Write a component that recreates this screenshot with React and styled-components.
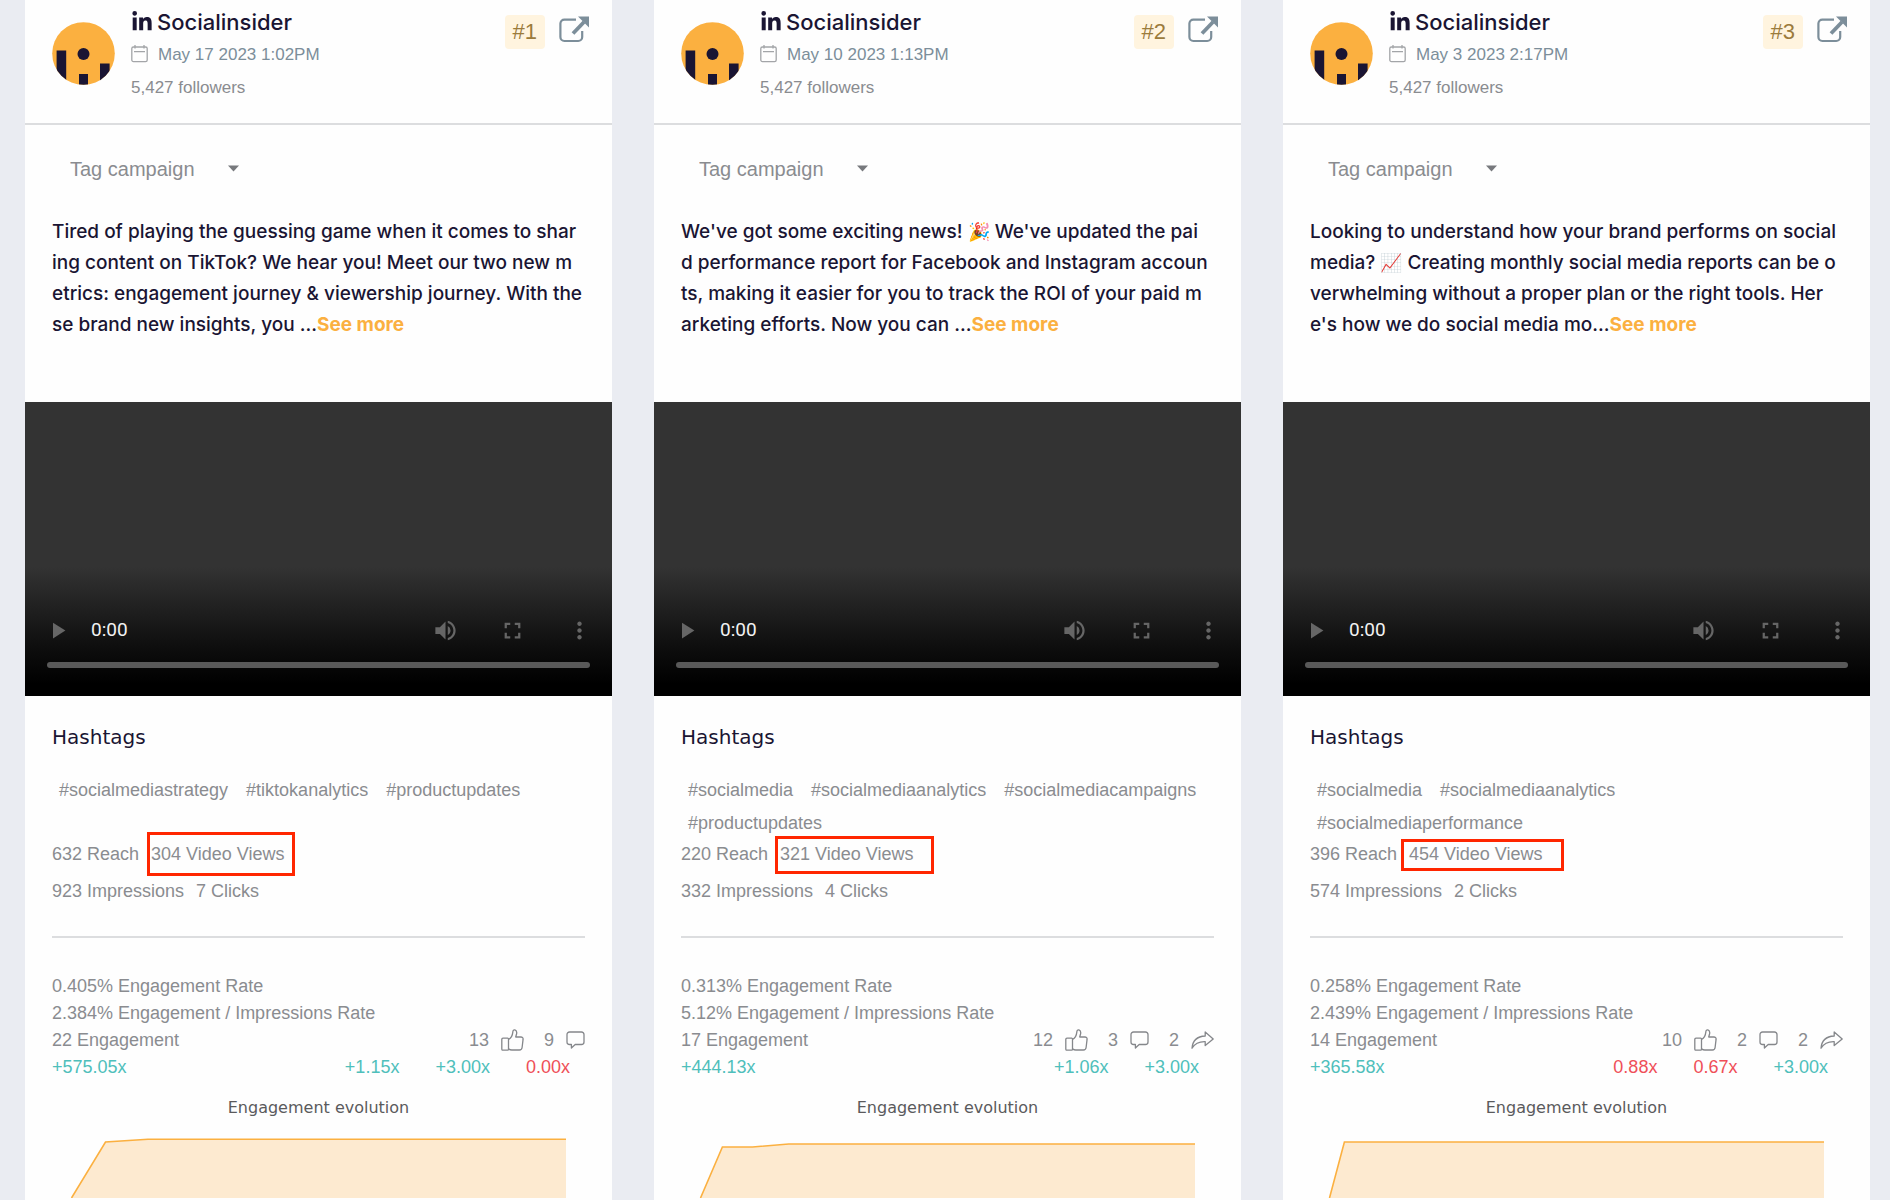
import React from 'react';
import styled, { createGlobalStyle } from 'styled-components';
import { FaLinkedinIn } from 'react-icons/fa';
import { MdPlayArrow, MdVolumeUp, MdFullscreen, MdMoreVert } from 'react-icons/md';

const colors = {
  page: '#eaecf2',
  card: '#fefefe',
  dark: '#1a1533',
  gray: '#8a8c90',
  slate: '#7c8e9a',
  line: '#dcdddf',
  orange: '#fbb040',
  orangeSoft: '#fdead0',
  up: '#4fbfbb',
  down: '#ef4f58',
  mark: '#ff2600',
};

const GlobalStyle = createGlobalStyle`
  *, *::before, *::after {
    box-sizing: border-box;
  }

  body {
    margin: 0;
    background: ${colors.page};
    color: ${colors.gray};
    font-family: "Liberation Sans", Arial, sans-serif;
    font-size: 18px;
  }
`;

const Page = styled.main`
  display: grid;
  grid-template-columns: repeat(3, minmax(0, 1fr));
  gap: 42px;
  min-height: 100vh;
  padding: 0 20px 0 25px;
`;

const Card = styled.article`
  display: flex;
  flex-direction: column;
  background: ${colors.card};
`;

const Header = styled.header`
  display: flex;
  align-items: flex-start;
  min-height: 125px;
  padding: 0 23px 0 27px;
  border-bottom: 2px solid ${colors.line};
`;

const Avatar = styled.svg`
  flex: none;
  width: 63px;
  height: 63px;
  margin: 22px 16px 0 0;
`;

const Profile = styled.div`
  flex: 1;
  display: grid;
  gap: 9px;
  padding-top: 10px;
`;

const ProfileName = styled.h2`
  display: flex;
  align-items: center;
  gap: 4px;
  margin: 0;
  color: ${colors.dark};
  font: 500 22px/24px Inter, sans-serif;
`;

const PostDate = styled.time`
  display: flex;
  align-items: center;
  gap: 10px;
  color: ${colors.slate};
  font-size: 17px;
  line-height: 24px;
`;

const Followers = styled.div`
  font-size: 17px;
  line-height: 24px;
`;

const HeaderActions = styled.div`
  display: flex;
  gap: 14px;
  padding-top: 15px;
`;

const Rank = styled.span`
  padding: 0 8px;
  border-radius: 4px;
  background: #fff4df;
  color: #9b7b3c;
  font-size: 22px;
  line-height: 34px;
`;

const OpenLink = styled.a`
  color: ${colors.slate};
`;

const Content = styled.div`
  padding: 32px 27px 62px;
`;

const SelectBox = styled.label`
  position: relative;
  display: inline-block;
  margin-left: 18px;
  vertical-align: top;
`;

const Select = styled.select`
  display: block;
  width: 180px;
  height: 24px;
  padding: 0;
  border: none;
  appearance: none;
  background: none;
  color: ${colors.gray};
  font: 20px/24px "Liberation Sans", Arial, sans-serif;
`;

const Caret = styled.svg`
  position: absolute;
  top: 8px;
  right: 11px;
  pointer-events: none;
`;

const Message = styled.p`
  margin: 35px 0 0;
  color: ${colors.dark};
  font: 500 19px/31px Inter, sans-serif;
  white-space: pre;
`;

const Emoji = styled.span`
  font-size: 18px;
  line-height: 1;
`;

const SeeMore = styled.button`
  padding: 0;
  border: none;
  background: none;
  color: ${colors.orange};
  font: inherit;
  font-weight: 700;
  cursor: pointer;
`;

const Video = styled.section`
  display: flex;
  flex-direction: column;
  justify-content: flex-end;
  gap: 18px;
  aspect-ratio: 2 / 1;
  padding-bottom: 28px;
  background: linear-gradient(#333 0%, #333 56%, #232323 68%, #0d0d0d 84%, #000 96%);
`;

const Controls = styled.div`
  display: flex;
  align-items: center;
  gap: 40px;
  padding: 0 19px;
`;

const ControlButton = styled.button`
  display: flex;
  padding: 0;
  border: none;
  background: none;
  color: #666;
  font-size: 27px;
`;

const VideoTime = styled.span`
  flex: 1;
  margin-left: -20px;
  color: #f2f2f2;
  font: 19px/24px Roboto, sans-serif;
`;

const Timeline = styled.input`
  height: 6px;
  margin: 0 22px;
  appearance: none;
  border-radius: 3px;
  background: #595959;

  &::-webkit-slider-thumb {
    appearance: none;
    width: 0;
  }
`;

const Section = styled.section`
  padding: 29px 27px 0;
`;

const SectionTitle = styled.h3`
  margin: 0;
  color: ${colors.dark};
  font: 400 20px/24px "DejaVu Sans", sans-serif;
`;

const Tags = styled.div`
  display: flex;
  flex-wrap: wrap;
  align-content: flex-start;
  column-gap: 18px;
  min-height: 66px;
  margin: 25px 8px 2px 7px;
  line-height: 33px;
`;

const Tag = styled.a`
  color: inherit;
  text-decoration: none;
`;

const StatRow = styled.div`
  display: flex;
  gap: 12px;
  margin-bottom: 13px;
  line-height: 24px;
`;

const Marked = styled.span`
  position: relative;
`;

// hand-drawn style annotation around the video views figure
const Mark = styled.span`
  position: absolute;
  top: ${({ $top }) => $top}px;
  left: ${({ $left }) => $left}px;
  width: ${({ $width }) => $width}px;
  height: ${({ $height }) => $height}px;
  border: 3px solid ${colors.mark};
`;

const Divider = styled.hr`
  height: 2px;
  margin: 33px 0 35px;
  border: none;
  background: ${colors.line};
`;

const Row = styled.div`
  display: flex;
  justify-content: space-between;
  line-height: 27px;
`;

const Reactions = styled.div`
  display: flex;
  gap: 20px;
`;

const Reaction = styled.span`
  display: flex;
  align-items: center;
  gap: 12px;
`;

const Changes = styled.div`
  display: flex;
  gap: 36px;
  padding-right: 15px;
`;

const Change = styled.span`
  color: ${({ $value }) => ($value.startsWith('+') ? colors.up : colors.down)};
`;

const ChartTitle = styled.h4`
  margin: 15px 0 0;
  color: #5a5a5c;
  font: 400 16px/24px "DejaVu Sans", sans-serif;
  text-align: center;
`;

const Chart = styled.svg`
  display: block;
  width: 100%;
`;

const AvatarImage = () => (
  <Avatar viewBox="0 0 63 63" role="img" aria-label="Socialinsider">
    <clipPath id="round">
      <circle cx="31.5" cy="31.5" r="31.3" />
    </clipPath>
    <g clipPath="url(#round)">
      <rect width="63" height="63" fill={colors.orange} />
      <g fill={colors.dark}>
        <rect x="4.6" y="28.5" width="9.6" height="36" />
        <rect x="27" y="52" width="9" height="12" />
        <rect x="48" y="41.5" width="9.6" height="22" />
        <circle cx="31.5" cy="32" r="6" />
      </g>
    </g>
  </Avatar>
);

const CalendarIcon = () => (
  <svg width="17" height="20" viewBox="0 0 17 20" fill="none" stroke="#a3a5a8" strokeWidth="1.3">
    <rect x="0.8" y="2" width="15.4" height="14.6" rx="1.6" />
    <path d="M4 0v3.4M13 0v3.4M3 6.6h11" />
  </svg>
);

const OpenIcon = () => (
  <svg width="30" height="28" viewBox="0 0 30 28" fill="none" stroke="currentColor">
    <path
      d="M17 4.6H5.4a4 4 0 0 0-4 4V22a4 4 0 0 0 4 4h13.8a4 4 0 0 0 4-4v-6"
      strokeWidth="2.2"
    />
    <path d="M14 18.500L25 7" strokeWidth="3.8" />
    <path d="M19 1.5h11v11z" fill="currentColor" stroke="none" />
  </svg>
);

const iconProps = { fill: 'none', stroke: '#85878b', strokeWidth: 1.3, strokeLinejoin: 'round' };

const LikeIcon = () => (
  <svg width="23" height="22" viewBox="0 0 23 22" {...iconProps}>
    <path d="M2 9.2h4.6c.6 0 .9.4.9.9v10.2c0 .6-.3.9-.9.9H2c-.8 0-1.2-.4-1.2-1.1v-9.8c0-.7.4-1.1 1.2-1.1z" />
    <path d="M7.5 10.5c2.6-1.5 4-3.7 4.3-7.4.1-1.7 1-2.5 2.1-2.2 1.6.5 2.1 2.3 1.6 4.4L14.7 8h5.2c1.5 0 2.3.9 2.2 2.2l-1 8.3c-.2 1.7-1.1 2.5-2.7 2.5h-7.6c-1.3 0-2.1-.3-3.3-1.1" />
  </svg>
);

const CommentIcon = () => (
  <svg width="19" height="18" viewBox="0 0 19 18" {...iconProps}>
    <path d="M3.5 1h12A2.5 2.5 0 0 1 18 3.5V11a2.5 2.5 0 0 1-2.5 2.5H9.2L5.4 17v-3.5H3.5A2.5 2.5 0 0 1 1 11V3.5A2.5 2.5 0 0 1 3.5 1z" />
  </svg>
);

const ShareIcon = () => (
  <svg width="23" height="18" viewBox="0 0 23 18" {...iconProps}>
    <path d="M14.2 1l8 7-8 6.600v-4C8.200 10.400 4.300 11.800 1 17.200 1.600 10 6.200 5.400 14.200 5z" />
  </svg>
);

const reactionIcons = { like: LikeIcon, comment: CommentIcon, share: ShareIcon };

const posts = [
  {
    rank: '#1',
    date: 'May 17 2023 1:02PM',
    message: [
      'Tired of playing the guessing game when it comes to shar\n',
      'ing content on TikTok? We hear you! Meet our two new m\n',
      'etrics: engagement journey & viewership journey. With the\n',
      'se brand new insights, you ...',
    ],
    tags: ['#socialmediastrategy', '#tiktokanalytics', '#productupdates'],
    reach: '632 Reach',
    views: '304 Video Views',
    mark: { $top: -10, $left: -4, $width: 148, $height: 44 },
    impressions: '923 Impressions',
    clicks: '7 Clicks',
    rate: '0.405% Engagement Rate',
    impressionRate: '2.384% Engagement / Impressions Rate',
    engagement: '22 Engagement',
    change: '+575.05x',
    reactions: [['like', 13], ['comment', 9]],
    changes: ['+1.15x', '+3.00x', '0.00x'],
    points: [[46.5, 78], [80.5, 22], [123, 19.3], [541, 19.3]],
  },
  {
    rank: '#2',
    date: 'May 10 2023 1:13PM',
    message: [
      "We've got some exciting news! ",
      { emoji: '🎉' },
      " We've updated the pai\n",
      'd performance report for Facebook and Instagram accoun\n',
      'ts, making it easier for you to track the ROI of your paid m\n',
      'arketing efforts. Now you can ...',
    ],
    tags: ['#socialmedia', '#socialmediaanalytics', '#socialmediacampaigns', '#productupdates'],
    reach: '220 Reach',
    views: '321 Video Views',
    mark: { $top: -6, $left: -5, $width: 159, $height: 38 },
    impressions: '332 Impressions',
    clicks: '4 Clicks',
    rate: '0.313% Engagement Rate',
    impressionRate: '5.12% Engagement / Impressions Rate',
    engagement: '17 Engagement',
    change: '+444.13x',
    reactions: [['like', 12], ['comment', 3], ['share', 2]],
    changes: ['+1.06x', '+3.00x'],
    points: [[46.5, 78], [68.4, 27], [98.5, 27], [134.7, 24], [541, 24]],
  },
  {
    rank: '#3',
    date: 'May 3 2023 2:17PM',
    message: [
      'Looking to understand how your brand performs on social\n',
      'media? ',
      { emoji: '📈' },
      ' Creating monthly social media reports can be o\n',
      'verwhelming without a proper plan or the right tools. Her\n',
      "e's how we do social media mo...",
    ],
    tags: ['#socialmedia', '#socialmediaanalytics', '#socialmediaperformance'],
    reach: '396 Reach',
    views: '454 Video Views',
    mark: { $top: -3, $left: -8, $width: 163, $height: 32 },
    impressions: '574 Impressions',
    clicks: '2 Clicks',
    rate: '0.258% Engagement Rate',
    impressionRate: '2.439% Engagement / Impressions Rate',
    engagement: '14 Engagement',
    change: '+365.58x',
    reactions: [['like', 10], ['comment', 2], ['share', 2]],
    changes: ['0.88x', '0.67x', '+3.00x'],
    points: [[46.5, 78], [61.4, 22], [541, 22]],
  },
];

const VideoPlayer = () => (
  <Video>
    <Controls>
      <ControlButton aria-label="Play"><MdPlayArrow /></ControlButton>
      <VideoTime>0:00</VideoTime>
      <ControlButton aria-label="Mute"><MdVolumeUp /></ControlButton>
      <ControlButton aria-label="Full screen"><MdFullscreen /></ControlButton>
      <ControlButton aria-label="More options"><MdMoreVert /></ControlButton>
    </Controls>
    <Timeline type="range" min="0" max="100" defaultValue="0" aria-label="Seek" />
  </Video>
);

const EvolutionChart = ({ points }) => {
  const line = points.map((point) => point.join(',')).join(' ');
  const lastX = points[points.length - 1][0];

  return (
    <Chart viewBox="0 0 587 78" aria-label="Engagement evolution">
      <polygon points={`${line} ${lastX},78`} fill={colors.orangeSoft} />
      <polyline points={line} fill="none" stroke={colors.orange} strokeWidth="1.6" />
    </Chart>
  );
};

const PostCard = ({ post }) => (
  <Card>
    <Header>
      <AvatarImage />
      <Profile>
        <ProfileName><FaLinkedinIn />Socialinsider</ProfileName>
        <PostDate><CalendarIcon />{post.date}</PostDate>
        <Followers>5,427 followers</Followers>
      </Profile>
      <HeaderActions>
        <Rank>{post.rank}</Rank>
        <OpenLink href="#" aria-label="Open post"><OpenIcon /></OpenLink>
      </HeaderActions>
    </Header>

    <Content>
      <SelectBox>
        <Select aria-label="Tag campaign" defaultValue="">
          <option value="">Tag campaign</option>
        </Select>
        <Caret width="11" height="7" viewBox="0 0 11 7">
          <path d="M0 0.5h11L5.5 6.500z" fill="#77797d" />
        </Caret>
      </SelectBox>
      <Message>
        {post.message.map((part, i) => (part.emoji ? <Emoji key={i}>{part.emoji}</Emoji> : part))}
        <SeeMore>See more</SeeMore>
      </Message>
    </Content>

    <VideoPlayer />

    <Section>
      <SectionTitle>Hashtags</SectionTitle>
      <Tags>
        {post.tags.map((tag) => <Tag key={tag} href="#">{tag}</Tag>)}
      </Tags>
      <StatRow>
        <span>{post.reach}</span>
        <Marked>{post.views}<Mark {...post.mark} /></Marked>
      </StatRow>
      <StatRow>
        <span>{post.impressions}</span>
        <span>{post.clicks}</span>
      </StatRow>
      <Divider />
      <Row>{post.rate}</Row>
      <Row>{post.impressionRate}</Row>
      <Row>
        <span>{post.engagement}</span>
        <Reactions>
          {post.reactions.map(([type, count]) => {
            const Icon = reactionIcons[type];
            return <Reaction key={type}>{count}<Icon /></Reaction>;
          })}
        </Reactions>
      </Row>
      <Row>
        <Change $value={post.change}>{post.change}</Change>
        <Changes>
          {post.changes.map((value) => <Change key={value} $value={value}>{value}</Change>)}
        </Changes>
      </Row>
      <ChartTitle>Engagement evolution</ChartTitle>
    </Section>
    <EvolutionChart points={post.points} />
  </Card>
);

const App = () => (
  <>
    <GlobalStyle />
    <Page>
      {posts.map((post) => <PostCard key={post.rank} post={post} />)}
    </Page>
  </>
);

export default App;
